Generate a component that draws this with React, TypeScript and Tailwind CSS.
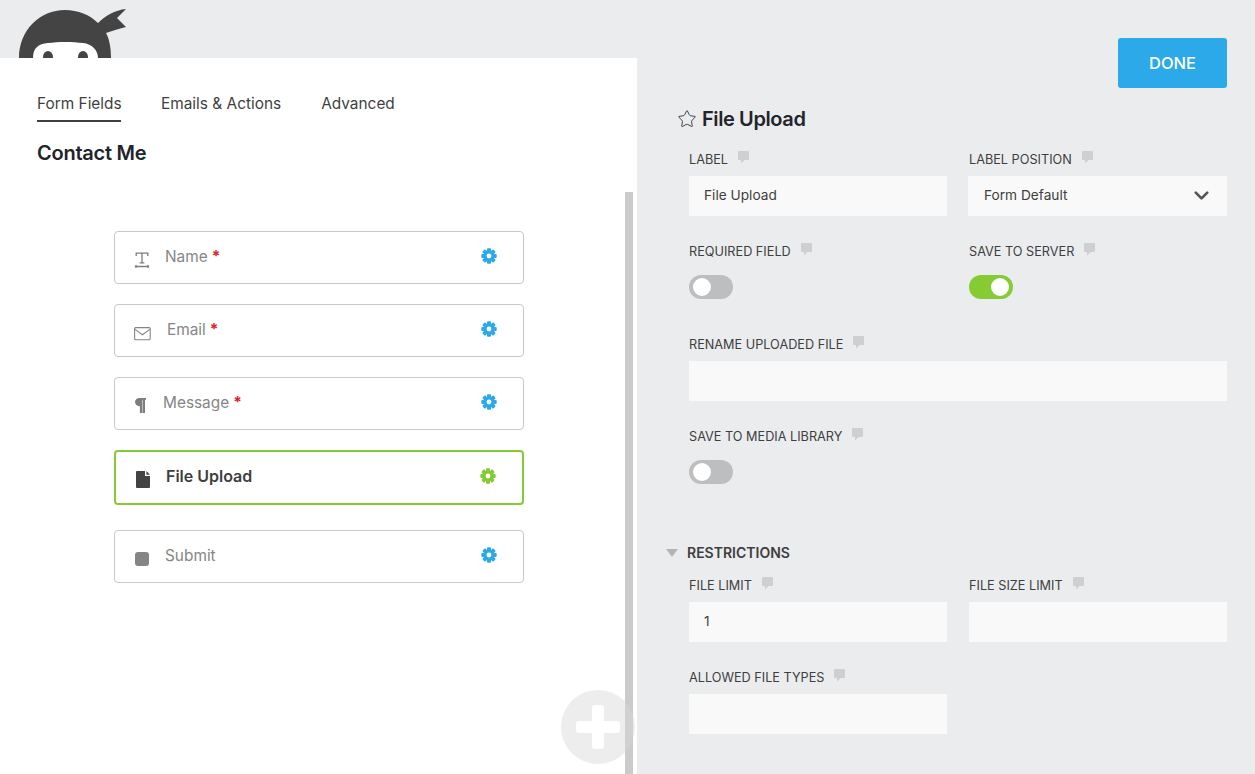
import { ChevronDown, Star } from "lucide-react";
import type { ReactNode } from "react";

const font = { fontFamily: "Inter, 'Noto Sans', sans-serif" };

function Logo() {
  return (
    <svg width="130" height="58" viewBox="0 0 130 58" className="absolute left-0 top-0">
      <path d="M19 58C19 30 40 10 65 10c13 0 25 5 33 13 7-7 17-13 28-14l-9 9 9 9c-8 2-14 4-20 6 4 7 5 17 5 25H19z" fill="#434443" />
      <path d="M33 58c0-10 5-14 15-15 10-1.500 25-1.500 35 0 9 1 15 7 15 15H33z" fill="#fff" />
      <ellipse cx="48" cy="57" rx="5" ry="6" fill="#434443" />
      <ellipse cx="83" cy="57" rx="5" ry="6" fill="#434443" />
    </svg>
  );
}

function Gear({ color }: { color: string }) {
  const teeth = [0, 45, 90, 135];
  return (
    <svg width="16" height="16" viewBox="0 0 16 16">
      {teeth.map((a) => (
        <rect key={a} x="6" y="0.3" width="4" height="15.4" rx="1" fill={color} transform={`rotate(${a} 8 8)`} />
      ))}
      <circle cx="8" cy="8" r="5.3" fill={color} />
      <circle cx="8" cy="8" r="2.4" fill="#fff" />
    </svg>
  );
}

function TextIcon() {
  return (
    <svg width="16" height="16" viewBox="0 0 16 16" fill="none" stroke="#7d7d7d" strokeWidth="1.3">
      <path d="M2.200 4V1.200h11.600V4M8 1.200v9.600M5.600 10.800h4.800M1 14.500h14M1 14.500l1.500-1.200M1 14.500l1.500 1.200M15 14.500l-1.500-1.200M15 14.500l-1.500 1.200" />
    </svg>
  );
}

function MailIcon() {
  return (
    <svg width="17" height="14" viewBox="0 0 17 14" fill="none" stroke="#858585" strokeWidth="1.100">
      <rect x="0.600" y="0.600" width="15.600" height="12.200" rx="1" />
      <path d="M1 2.400l7.400 5.400 7.400-5.400" />
    </svg>
  );
}

function ParagraphIcon() {
  return (
    <svg width="11" height="15" viewBox="0 0 11 15" fill="#7d7d7d">
      <path d="M4.500 0H11v1.800H10V15H7.700V1.800H7.200V15H4.900V8.200h-.4C1.900 8.200 0 6.400 0 4.100S1.900 0 4.500 0z" />
    </svg>
  );
}

function FileIcon() {
  return (
    <svg width="15" height="17" viewBox="0 0 15 17" fill="#434343">
      <path d="M1 0h8v5h5v11a1 1 0 0 1-1 1H1a1 1 0 0 1-1-1V1a1 1 0 0 1 1-1zM10.400 0L14 3.700h-3.600z" />
    </svg>
  );
}

function FieldRow({
  icon,
  name,
  gap,
  iconClass,
  required,
  active,
  textClass,
}: {
  icon: ReactNode;
  name: string;
  gap: string;
  iconClass: string;
  required?: boolean;
  active?: boolean;
  textClass: string;
}) {
  return (
    <div
      className={
        active
          ? "flex h-[55px] w-[410px] items-center rounded-[4px] border-2 border-[#86cb33] bg-white pl-[19px] pr-[26px]"
          : "flex h-[53px] w-[410px] items-center rounded-[4px] border border-[#c9c9c9] bg-white pl-[19px] pr-[26px]"
      }
    >
      <span className={iconClass}>{icon}</span>
      <span className={`${gap} leading-5 ${textClass}`}>
        {name}
        {required && <span className="ml-[4px] font-bold text-[#e0202a]">*</span>}
      </span>
      <span className="-mt-[3px] ml-auto">
        <Gear color={active ? "#86cb33" : "#2ca9e8"} />
      </span>
    </div>
  );
}

function Hint() {
  return (
    <svg width="11" height="13" viewBox="0 0 11 13" fill="#cfcfcf" className="ml-[10px] -mt-[4px]">
      <path d="M1 0h9a1 1 0 0 1 1 1v7a1 1 0 0 1-1 1H6.500L3 12.500V9H1a1 1 0 0 1-1-1V1a1 1 0 0 1 1-1z" />
    </svg>
  );
}

function FieldLabel({ text }: { text: string }) {
  return (
    <div className="flex h-[17px] items-center text-[12.7px] leading-4 text-[#3e3e3e]">
      {text}
      <Hint />
    </div>
  );
}

function TextBox({ label, value, className }: { label: string; value?: string; className: string }) {
  return (
    <div className={className}>
      <FieldLabel text={label} />
      <div className="mt-[8px] flex h-[40px] items-center bg-[#f9f9f9] pb-px pl-[15px] text-[13.7px] text-[#3e3e3e]">{value}</div>
    </div>
  );
}

function Toggle({ label, on, className }: { label: string; on?: boolean; className: string }) {
  return (
    <div className={className}>
      <FieldLabel text={label} />
      <div
        className={
          on
            ? "mt-[15px] flex h-[24px] w-[44px] items-center justify-end rounded-full bg-[#86cb33] px-[4px]"
            : "mt-[15px] flex h-[24px] w-[44px] items-center rounded-full bg-[#bdbebf] px-[4px]"
        }
      >
        <span className="h-[18px] w-[18px] rounded-full bg-white" />
      </div>
    </div>
  );
}

export default function App() {
  return (
    <div style={font} className="relative flex h-[774px] w-[1255px] overflow-hidden bg-[#ebecee]">
      <Logo />

      <div className="relative mt-[58px] h-[716px] w-[637px] shrink-0 bg-white pl-[37px]">
        <div className="flex gap-[40px] pt-[36px] text-[15.4px] leading-[20px] text-[#3f3f3f]">
          <div className="h-[28px] w-[84px] whitespace-nowrap border-b-2 border-[#3f3f3f]">Form Fields</div>
          <div>Emails &amp; Actions</div>
          <div>Advanced</div>
        </div>
        <h1 className="mt-[17px] text-[20px] font-semibold leading-[28px] tracking-[-0.25px] text-[#22242a]">Contact Me</h1>

        <div className="ml-[77px] mt-[64px] flex flex-col">
          <FieldRow icon={<TextIcon />} name="Name" gap="ml-[15px]" iconClass="mt-[4px]" required textClass="-mt-[2px] text-[15.4px] text-[#868686]" />
          <div className="h-[20px]" />
          <FieldRow icon={<MailIcon />} name="Email" gap="ml-[16px]" iconClass="mt-[6px]" required textClass="-mt-[2px] text-[15.4px] text-[#868686]" />
          <div className="h-[20px]" />
          <FieldRow icon={<ParagraphIcon />} name="Message" gap="ml-[17px]" iconClass="ml-[1px] mt-[3px]" required textClass="-mt-[2px] text-[15.4px] text-[#868686]" />
          <div className="h-[20px]" />
          <FieldRow icon={<FileIcon />} name="File Upload" gap="ml-[15px]" iconClass="ml-[1px] mt-[4px]" active textClass="-mt-[4px] text-[16px] font-semibold text-[#3f3f3f]" />
          <div className="h-[25px]" />
          <FieldRow
            icon={<span className="block h-[14px] w-[14px] rounded-[3px] bg-[#858585]" />}
            name="Submit"
            gap="ml-[16px]"
            iconClass="ml-[1px] mt-[4px]"
            textClass="-mt-[2px] text-[15.4px] text-[#868686]"
          />
        </div>

        <div className="absolute right-[4px] top-[134px] h-[582px] w-[8px] bg-[#cbcbcb]" />
        <div className="absolute left-[561px] top-[632px] flex h-[74px] w-[74px] items-center justify-center rounded-full bg-[#d8d8d8]/45">
          <div className="relative h-[44px] w-[44px]">
            <span className="absolute left-[16px] top-0 h-[44px] w-[12px] rounded-[3px] bg-white" />
            <span className="absolute left-0 top-[16px] h-[12px] w-[44px] rounded-[3px] bg-white" />
          </div>
        </div>
      </div>

      <div className="min-w-0 flex-1 pl-[40px] pr-[28px]">
        <div className="flex justify-end pt-[38px]">
          <button className="h-[50px] w-[109px] rounded-[3px] bg-[#2ca9e8] text-[16.500px] font-medium text-white">DONE</button>
        </div>
        <div className="mt-[17px] flex items-center">
          <Star size={20} strokeWidth={1.1} color="#33363b" />
          <h2 className="ml-[5px] text-[20px] font-semibold leading-[28px] tracking-[-0.4px] text-[#22242a]">File Upload</h2>
        </div>

        <div className="ml-[12px] mt-[18px] grid grid-cols-[258px_258px] gap-x-[22px]">
          <TextBox label="LABEL" value="File Upload" className="" />
          <div>
            <FieldLabel text="LABEL POSITION" />
            <div className="-ml-px mt-[8px] flex h-[40px] items-center justify-between bg-[#f9f9f9] pb-px pl-[16px] pr-[14px] text-[13.7px] text-[#3e3e3e]">
              Form Default
              <ChevronDown size={23} strokeWidth={2.8} color="#555555" />
            </div>
          </div>
          <Toggle label="REQUIRED FIELD" className="mt-[27px]" />
          <Toggle label="SAVE TO SERVER" on className="mt-[27px]" />
          <TextBox label="RENAME UPLOADED FILE" className="col-span-2 mt-[37px]" />
          <Toggle label="SAVE TO MEDIA LIBRARY" className="mt-[27px]" />
        </div>

        <div className="-ml-[11px] mt-[61px] flex items-center text-[14px] font-semibold leading-4 text-[#3e3e3e]">
          <span className="mr-[9px] h-0 w-0 border-x-[6px] border-t-[8px] border-x-transparent border-t-[#b4b4b4]" />
          RESTRICTIONS
        </div>

        <div className="ml-[12px] mt-[16px] grid grid-cols-[258px_258px] gap-x-[22px]">
          <TextBox label="FILE LIMIT" value="1" className="" />
          <TextBox label="FILE SIZE LIMIT" className="" />
          <TextBox label="ALLOWED FILE TYPES" className="mt-[27px]" />
        </div>
      </div>
    </div>
  );
}
